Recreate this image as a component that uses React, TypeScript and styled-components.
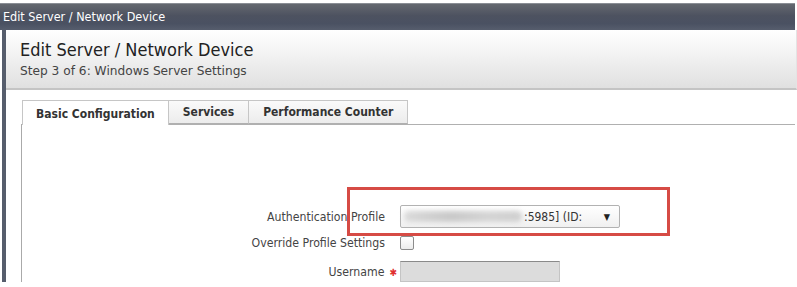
import styled, { createGlobalStyle } from 'styled-components';

const GlobalStyle = createGlobalStyle`
  html, body {
    margin: 0;
    padding: 0;
    background: #ffffff;
  }
  body {
    font-family: "DejaVu Sans Condensed", "DejaVu Sans", Tahoma, sans-serif;
    font-size: 12px;
    color: #333;
  }
`;

const Window = styled.div`
  position: relative;
  width: 797px;
  height: 287px;
  padding-top: 3px;
  box-sizing: border-box;
  overflow: hidden;
`;

const TitleBar = styled.div`
  width: 795px;
  height: 27px;
  box-sizing: border-box;
  border-top: 1px solid #8a8e95;
  background: linear-gradient(#64686f, #4d5260 45%, #4a5162 75%, #565d6d);
  color: #ffffff;
  font-size: 12.5px;
  line-height: 26px;
  padding-left: 3px;
`;

const Body = styled.div`
  display: flex;
  height: 252px;
`;

const FrameEdge = styled.div`
  width: 4px;
  margin-left: 2px;
  background: #565d6c;
`;

const Content = styled.div`
  flex: 1;
  display: flex;
  flex-direction: column;
  width: 789px;
`;

const Header = styled.div`
  height: 60px;
  flex: none;
  box-sizing: border-box;
  border-bottom: 2px solid #c4c4c4;
  border-right: 1px solid #e4e4e4;
  background: linear-gradient(#ffffff, #f3f3f3 40%, #e0e0e0);
  padding: 9px 0 0 14px;
`;

const HeaderTitle = styled.div`
  font-size: 18px;
  color: #222;
  line-height: 22px;
`;

const HeaderStep = styled.div`
  font-family: "DejaVu Sans", Tahoma, sans-serif;
  font-size: 12.2px;
  color: #444;
  line-height: 18px;
  margin-top: 1px;
`;

const Main = styled.div`
  flex: 1;
  padding: 10px 0 0 15px;
  display: flex;
  flex-direction: column;
`;

const TabRow = styled.div`
  display: flex;
  height: 24px;
  margin-left: 1px;
`;

const Tab = styled.div<{ $active?: boolean }>`
  height: ${p => (p.$active ? '25px' : '24px')};
  box-sizing: border-box;
  padding: 0 ${p => (p.$active ? '13px' : '14px')};
  border: 1px solid #c6c6c6;
  border-left: ${p => (p.$active ? '1px solid #c6c6c6' : 'none')};
  border-bottom: ${p => (p.$active ? 'none' : '1px solid #b0b0b0')};
  background: ${p => (p.$active ? '#ffffff' : 'linear-gradient(#fafafa, #ececec)')};
  font-weight: bold;
  font-size: 12px;
  color: #333;
  line-height: ${p => (p.$active ? '27px' : '22px')};
  position: relative;
  z-index: 1;
`;

const TabPanel = styled.div`
  flex: 1;
  border-left: 1px solid #aaaaaa;
  border-top: 1px solid #b0b0b0;
  margin-right: 2px;
  padding-top: 80px;
  display: flex;
  flex-direction: column;
`;

const FormRow = styled.div<{ $height: number; $gap?: number }>`
  display: grid;
  grid-template-columns: 363px auto;
  justify-content: start;
  column-gap: 15px;
  align-items: center;
  height: ${p => p.$height}px;
  margin-top: ${p => p.$gap ?? 0}px;
`;

const Label = styled.div`
  text-align: right;
  color: #444;
  font-size: 12.2px;
  white-space: nowrap;
`;

const Required = styled.span`
  color: #e03030;
  margin-left: 5px;
  margin-right: -12px;
  font-size: 10px;
`;

const SelectBox = styled.div`
  width: 220px;
  height: 23px;
  box-sizing: border-box;
  border: 1px solid #b2b2b2;
  border-radius: 2px;
  background: linear-gradient(#ffffff, #f0f0f0);
  display: flex;
  align-items: center;
  padding-left: 3px;
`;

const Blurred = styled.div`
  width: 118px;
  height: 11px;
  border-radius: 5px;
  background: linear-gradient(90deg, #dadada, #c8c8c8 40%, #d4d4d4 70%, #cfcfcf);
  filter: blur(2.5px);
`;

const SelectText = styled.span`
  color: #333;
  font-size: 12px;
  margin-left: 2px;
`;

const Arrow = styled.span`
  margin-left: auto;
  margin-right: 9px;
  font-size: 9px;
  color: #222;
`;

const CheckBox = styled.div`
  width: 14px;
  height: 14px;
  box-sizing: border-box;
  border: 1px solid #8c8c8c;
  border-radius: 2px;
  background: linear-gradient(#ffffff, #ececec);
`;

const TextInput = styled.div`
  width: 160px;
  height: 21px;
  box-sizing: border-box;
  border: 1px solid #c4c4c4;
  border-top: 1px solid #8a8a8a;
  background: #dcdcdc;
`;

const Highlight = styled.div`
  position: absolute;
  left: 347px;
  top: 187px;
  width: 323px;
  height: 49px;
  box-sizing: border-box;
  border: 3px solid #d64b45;
  pointer-events: none;
`;

export default function App() {
  return (
    <>
      <GlobalStyle />
      <Window>
        <TitleBar>Edit Server / Network Device</TitleBar>
        <Body>
          <FrameEdge />
          <Content>
            <Header>
              <HeaderTitle>Edit Server / Network Device</HeaderTitle>
              <HeaderStep>Step 3 of 6: Windows Server Settings</HeaderStep>
            </Header>
            <Main>
              <TabRow>
                <Tab $active>Basic Configuration</Tab>
                <Tab>Services</Tab>
                <Tab>Performance Counter</Tab>
              </TabRow>
              <TabPanel>
                <FormRow $height={23}>
                  <Label>Authentication Profile</Label>
                  <SelectBox>
                    <Blurred />
                    <SelectText>:5985] (ID:</SelectText>
                    <Arrow>▼</Arrow>
                  </SelectBox>
                </FormRow>
                <FormRow $height={22} $gap={4}>
                  <Label>Override Profile Settings</Label>
                  <CheckBox />
                </FormRow>
                <FormRow $height={21} $gap={7}>
                  <Label>
                    Username<Required>✱</Required>
                  </Label>
                  <TextInput />
                </FormRow>
              </TabPanel>
            </Main>
          </Content>
        </Body>
        <Highlight />
      </Window>
    </>
  );
}
